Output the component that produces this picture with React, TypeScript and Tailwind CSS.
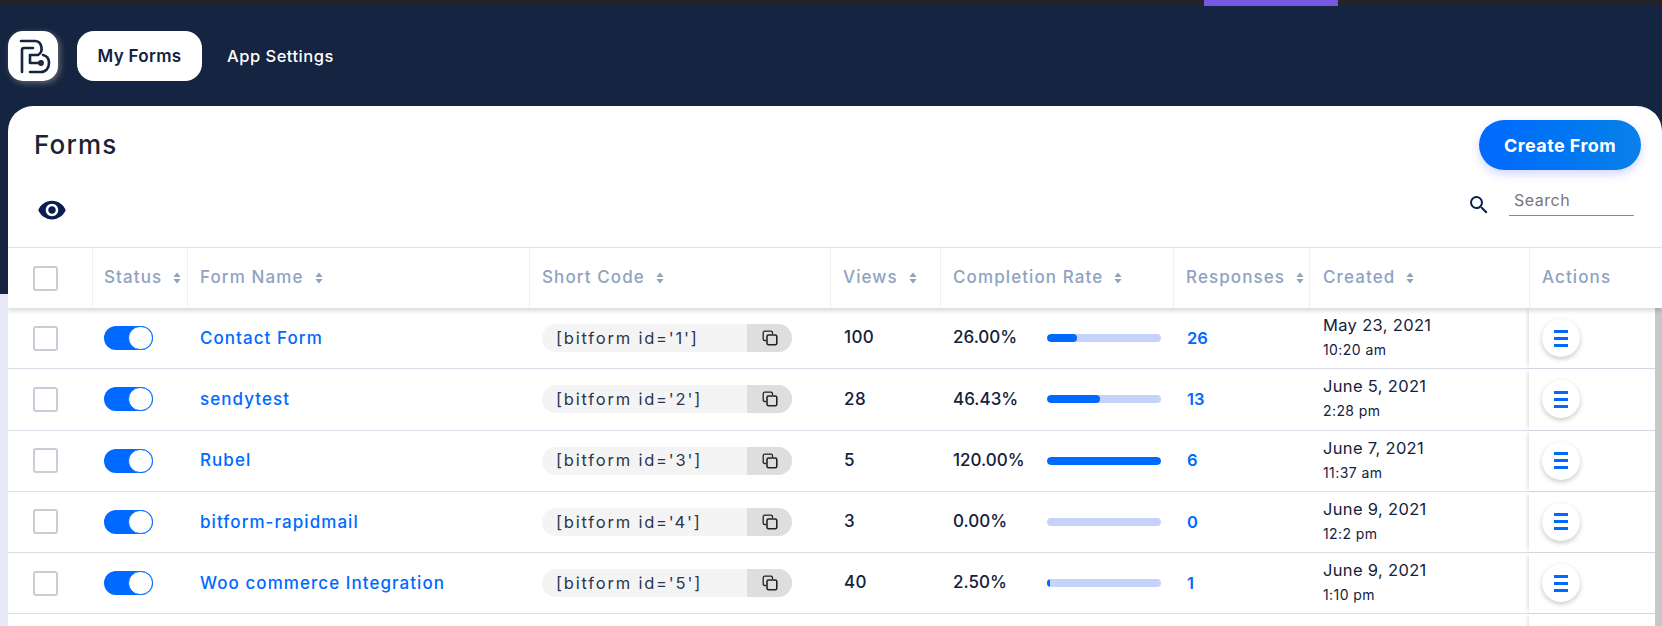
import React from 'react';

interface FormRow {
  id: number;
  name: string;
  views: number;
  rate: string;
  pct: number;
  responses: number;
  date: string;
  time: string;
}

const rows: FormRow[] = [
  { id: 1, name: 'Contact Form', views: 100, rate: '26.00%', pct: 26, responses: 26, date: 'May 23, 2021', time: '10:20 am' },
  { id: 2, name: 'sendytest', views: 28, rate: '46.43%', pct: 46.43, responses: 13, date: 'June 5, 2021', time: '2:28 pm' },
  { id: 3, name: 'Rubel', views: 5, rate: '120.00%', pct: 100, responses: 6, date: 'June 7, 2021', time: '11:37 am' },
  { id: 4, name: 'bitform-rapidmail', views: 3, rate: '0.00%', pct: 0, responses: 0, date: 'June 9, 2021', time: '12:2 pm' },
  { id: 5, name: 'Woo commerce Integration', views: 40, rate: '2.50%', pct: 2.5, responses: 1, date: 'June 9, 2021', time: '1:10 pm' },
];

const SortIcon = () => (
  <svg width="8" height="12" viewBox="0 0 8 12" className="ml-[11px] shrink-0">
    <path d="M4 0.5 L7.6 5 H0.4 Z M4 11.5 L0.4 7 H7.6 Z" fill="#8fa3bf" />
  </svg>
);

const Logo = () => (
  <svg width="50" height="50" viewBox="0 0 50 50" fill="none" stroke="#152440" strokeWidth="2.6" strokeLinecap="round" strokeLinejoin="round">
    <path d="M13 10 H27 C34 10 36 21 30 24 H22 V32 H31" />
    <path d="M14 41 V19 C14 18 14.5 17 16 17 H25" />
    <path d="M35 24 C39.5 25 41 28 41 32 C41 37 38 41 33 41 H22" />
    <circle cx="33" cy="32" r="1.6" />
  </svg>
);

const CopyIcon = () => (
  <svg width="16" height="16" viewBox="0 0 16 16" fill="none" stroke="#222" strokeWidth="1.3">
    <path d="M4 10.5 H2.8 C1.8 10.5 1.2 10 1.2 9 V2.8 C1.2 1.8 1.8 1.2 2.8 1.2 H9 C10 1.2 10.5 1.8 10.5 2.8 V4" />
    <rect x="5" y="5" width="9.8" height="9.8" rx="1.6" strokeWidth="1.6" />
  </svg>
);

const Eye = () => (
  <svg width="30" height="30" viewBox="0 0 24 24" fill="#0a1f50">
    <path d="M12 4.5C7 4.5 2.73 7.61 1 12c1.73 4.39 6 7.5 11 7.5s9.27-3.11 11-7.5c-1.73-4.39-6-7.5-11-7.5zM12 17c-2.76 0-5-2.24-5-5s2.24-5 5-5 5 2.24 5 5-2.24 5-5 5zm0-8c-1.66 0-3 1.34-3 3s1.34 3 3 3 3-1.34 3-3-1.34-3-3-3z" />
  </svg>
);

const SearchIcon = () => (
  <svg width="24" height="24" viewBox="0 0 24 24" fill="#0a1f50">
    <path d="M15.5 14h-.79l-.28-.27A6.47 6.47 0 0 0 16 9.5 6.5 6.5 0 1 0 9.5 16c1.61 0 3.09-.59 4.23-1.57l.27.28v.79l5 4.99L20.49 19l-4.99-5zm-6 0C7.01 14 5 11.99 5 9.5S7.01 5 9.5 5 14 7.01 14 9.5 11.99 14 9.5 14z" />
  </svg>
);

const Checkbox = () => <div className="w-[25px] h-[25px] rounded-[3px] border-2 border-[#c9cdd6] bg-white" />;

const HeadCell = ({ w, label, pl }: { w: string; label: string; pl: string }) => (
  <div className={`${w} ${pl} h-full flex items-center border-r border-[#eef0f4] shrink-0`}>
    <span className="whitespace-nowrap">{label}</span>
    <SortIcon />
  </div>
);

const ActionCell = () => (
  <div className="relative flex-1 h-full pl-[13px] flex items-center shadow-[-3px_0_4px_-2px_rgba(0,0,0,0.15)]">
    <button className="w-[38px] h-[38px] rounded-full bg-white flex flex-col items-center justify-center gap-[4px] shadow-[0_2px_5px_rgba(0,0,0,0.22)]">
      <span className="w-[14px] h-[3px] bg-[#0069ff]" />
      <span className="w-[14px] h-[3px] bg-[#0069ff]" />
      <span className="w-[14px] h-[3px] bg-[#0069ff]" />
    </button>
  </div>
);

const DateCell = ({ date, time }: { date: string; time: string }) => (
  <div className="w-[220px] pl-[14px] pb-[3px] shrink-0">
    <div className="text-[16.5px] leading-[22px] tracking-[0.02em] whitespace-nowrap">{date}</div>
    <div className="h-[18px] text-[14px] leading-[18px] mt-[5px] tracking-[0.03em] whitespace-nowrap">{time}</div>
  </div>
);

const Row = ({ row }: { row: FormRow }) => (
  <div className="flex h-[61.25px] border-b border-[#dcdde8] items-center text-[#14213d] shrink-0">
    <div className="w-[84px] pl-[25px] shrink-0"><Checkbox /></div>
    <div className="w-[95px] pl-3 shrink-0">
      <div className="w-[49px] h-6 rounded-full bg-[#0069ff] flex justify-end">
        <div className="w-[25px] h-6 rounded-full bg-white border border-[#0069ff]" />
      </div>
    </div>
    <div className="w-[342px] pl-[13px] pt-[1px] shrink-0 text-[#0069ff] text-[17px] font-medium tracking-[1.05px] whitespace-nowrap">{row.name}</div>
    <div className="w-[301px] pl-[13px] shrink-0">
      <div className="w-[250px] h-7 flex rounded-full overflow-hidden bg-[#f4f4f4]">
        <div className="w-[205px] pl-[14px] flex items-center text-[16.5px] tracking-[1.8px] text-[#2a3650] whitespace-nowrap">[bitform id='{row.id}']</div>
        <div className="w-[45px] bg-[#dedede] flex items-center justify-center"><CopyIcon /></div>
      </div>
    </div>
    <div className="w-[110px] pl-[14px] shrink-0 text-[17px] font-medium tracking-[0.4px]">{row.views}</div>
    <div className="w-[233px] pl-[13px] shrink-0 flex items-center">
      <span className="w-[94px] text-[17px] font-medium whitespace-nowrap">{row.rate}</span>
      <div className="w-[114px] h-2 rounded-full bg-[#c6d2fa] overflow-hidden">
        <div className="h-full rounded-full bg-[#0069ff]" style={{ width: `${row.pct}%` }} />
      </div>
    </div>
    <div className="w-[136px] pl-[14px] shrink-0 text-[#0069ff] text-[16.5px] font-semibold">{row.responses}</div>
    <DateCell date={row.date} time={row.time} />
    <ActionCell />
  </div>
);

export default function App() {
  return (
    <div className="relative h-[626px] w-full overflow-hidden bg-[#e8e9f6] font-['Inter',sans-serif]">
      {/* navy header behind the card */}
      <div className="h-[294px] bg-[#152440]">
        <div className="h-[6px] bg-[#212529] flex">
          <div className="ml-[1204px] w-[134px] bg-[#7758e2]" />
        </div>
        <nav className="flex items-center pl-2 pt-[25px]">
          <div className="w-[50px] h-[50px] rounded-[15px] bg-white flex items-center justify-center shadow-[2px_2px_6px_rgba(255,235,200,0.35)]">
            <Logo />
          </div>
          <div className="ml-[19px] w-[125px] h-[50px] pt-[1px] rounded-[17px] bg-white flex items-center justify-center text-[#14213d] text-[17px] font-semibold tracking-[0.3px] whitespace-nowrap">My Forms</div>
          <div className="ml-[25px] text-white text-[16.5px] font-medium tracking-[0.5px] whitespace-nowrap">App Settings</div>
        </nav>
      </div>

      {/* white card */}
      <main className="absolute left-2 right-0 top-[106px] bottom-0 bg-white rounded-t-[25px] flex flex-col overflow-hidden">
        <div className="flex justify-between pl-[26px] pr-[21px] pt-[14px] h-[64px] shrink-0">
          <h1 className="text-[26px] leading-[50px] font-medium text-[#1c2333] tracking-[1.2px]">Forms</h1>
          <button className="w-[162px] h-[50px] pt-[1px] rounded-[25px] bg-gradient-to-r from-[#0069ff] to-[#0a80e8] text-white text-[18px] font-bold tracking-[0.4px] shadow-[0_4px_10px_rgba(80,90,255,0.25)] whitespace-nowrap">Create From</button>
        </div>
        <div className="flex justify-between items-start pl-[29px] pr-[28px] h-[77px] shrink-0">
          <div className="mt-[25px]"><Eye /></div>
          <div className="flex items-start">
            <div className="mt-[23px]"><SearchIcon /></div>
            <div className="ml-[18px] mt-[14px] w-[125px] h-[32px] border-b border-[#8a8a8a] pl-[5px] text-[16px] tracking-[0.5px] leading-[32px] text-[#777]">Search</div>
          </div>
        </div>

        <div className="relative z-10 flex h-[61px] shrink-0 items-center border-t border-[#dfe0e8] text-[#8fa3bf] text-[17px] font-medium tracking-[1.1px] shadow-[0_3px_4px_rgba(0,0,0,0.14)] bg-white">
          <div className="w-[85px] h-full pl-[25px] flex items-center border-r border-[#eef0f4] shrink-0"><Checkbox /></div>
          <HeadCell w="w-[95px]" label="Status" pl="pl-[11px]" />
          <HeadCell w="w-[342px]" label="Form Name" pl="pl-3" />
          <HeadCell w="w-[301px]" label="Short Code" pl="pl-3" />
          <HeadCell w="w-[110px]" label="Views" pl="pl-3" />
          <HeadCell w="w-[233px]" label="Completion Rate" pl="pl-3" />
          <HeadCell w="w-[136px]" label="Responses" pl="pl-3" />
          <HeadCell w="w-[220px]" label="Created" pl="pl-[13px]" />
          <div className="flex-1 pl-3">Actions</div>
        </div>

        <div className="flex flex-col">
          {rows.map(r => <Row key={r.id} row={r} />)}
          {/* next row is cut by the window, only its date and button show */}
          <div className="flex h-[61.25px] items-center text-[#14213d] shrink-0">
            <div className="w-[1001px] shrink-0" />
            <div className="w-[300px] shrink-0" />
            <DateCell date="June 30, 2021" time="" />
            <ActionCell />
          </div>
        </div>
      </main>

      {/* scrollbar thumb at the right edge */}
      <div className="absolute right-0 top-[308px] bottom-0 w-[7px] bg-[#c8c8c8]" />
    </div>
  );
}
